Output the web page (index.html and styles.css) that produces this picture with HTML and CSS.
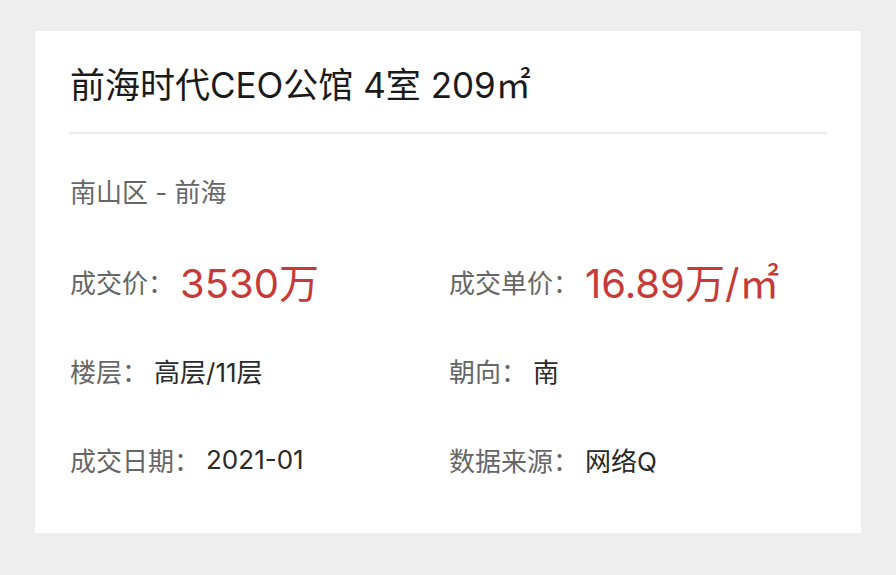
FILE: index.html
```html
<!DOCTYPE html>
<html lang="zh-CN">
<head>
<meta charset="utf-8">
<title>成交详情</title>
<link rel="stylesheet" href="styles.css">
</head>
<body>
<div class="page">
  <section class="card">
    <h1 class="title">前海时代CEO公馆 4室 209㎡</h1>
    <div class="divider"></div>
    <div class="location">南山区 - 前海</div>
    <div class="grid">
      <div class="item"><span class="label">成交价：</span><span class="price">3530万</span></div>
      <div class="item"><span class="label">成交单价：</span><span class="price">16.89万/㎡</span></div>
      <div class="item"><span class="label">楼层：</span><span class="value">高层/11层</span></div>
      <div class="item"><span class="label">朝向：</span><span class="value">南</span></div>
      <div class="item"><span class="label">成交日期：</span><span class="value">2021-01</span></div>
      <div class="item"><span class="label">数据来源：</span><span class="value">网络Q</span></div>
    </div>
  </section>
</div>
</body>
</html>
```
FILE: styles.css
```css
html, body {
  margin: 0;
  padding: 0;
  background: #eeeeee;
}
body {
  font-family: Inter, "Noto Sans CJK SC", sans-serif;
}
.page {
  padding: 31px 0 0 35px;
}
.card {
  width: 826px;
  box-sizing: border-box;
  background: #ffffff;
  padding: 34px 34px 52px 34px;
}
.title {
  margin: 0;
  font-size: 35px;
  font-weight: 400;
  line-height: 40px;
  color: #1a1a1a;
  padding-left: 1px;
}
.divider {
  height: 2px;
  background: #ececec;
  margin-top: 27px;
}
.location {
  margin-top: 37px;
  font-size: 26px;
  line-height: 44px;
  color: #666666;
  padding-left: 1px;
}
.grid {
  margin-top: 44px;
  display: grid;
  grid-template-columns: 1fr 1fr;
  row-gap: 45px;
}
.item {
  display: flex;
  align-items: center;
  height: 44px;
  padding-left: 1px;
}
.label {
  font-size: 26px;
  color: #666666;
}
.value {
  font-size: 26px;
  color: #2a2a2a;
  margin-left: 6px;
}
.price {
  font-size: 40px;
  color: #c63a3a;
  margin-left: 6px;
}
```
